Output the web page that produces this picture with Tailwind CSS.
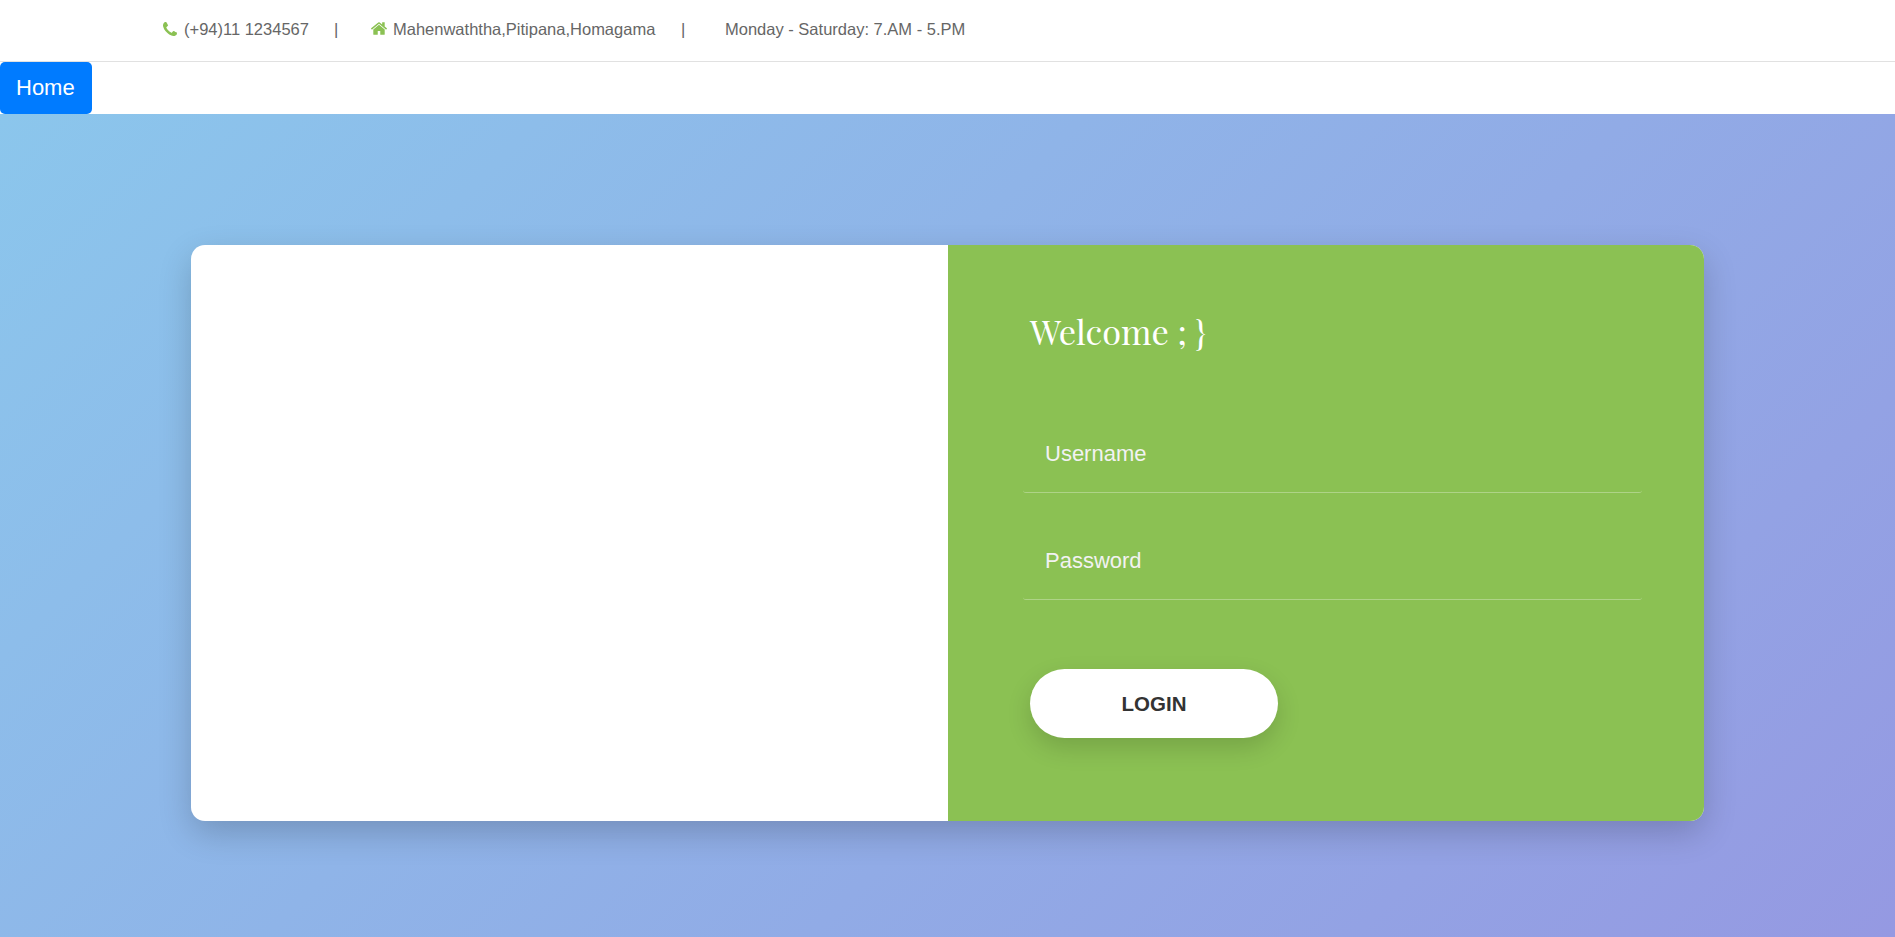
<!DOCTYPE html>
<html lang="en">
<head>
<meta charset="utf-8">
<title>Login</title>
<script src="https://cdn.jsdelivr.net/npm/@tailwindcss/browser@4"></script>
</head>
<body class="flex h-screen flex-col overflow-hidden bg-white font-['Liberation_Sans',Arial,sans-serif]">
<header class="flex h-[62px] shrink-0 items-start border-b border-[#e1e1e1] pt-[17px] pl-[163px] text-[16.5px] leading-6 whitespace-nowrap text-[#666]">
  <div class="flex w-[171px]">
    <svg class="mt-[5px] mr-[7px] size-[14px] text-[#8bc153]" viewBox="0 128 1408 1408" fill="currentColor"><path d="M1408 1240q0 27-10 70.500t-21 68.500q-21 50-122 106-94 51-186 51-27 0-53-3.500t-57.500-12.500-47-14.500-55.500-20.500-49-18q-98-35-175-83-127-79-264-216t-216-264q-48-77-83-175-3-9-18-49t-20.500-55.500-14.500-47-12.500-57.500-3.500-53q0-92 51-186 56-101 106-122 25-11 68.500-21t70.500-10q14 0 21 3 18 6 53 76 11 19 30 54t35 63.500 31 53.500q3 4 17.500 25t21.500 35.500 7 28.500q0 20-28.500 50t-62 55-62 53-28.500 46q0 9 5 22.500t8.500 20.500 14 24 11.500 19q76 137 174 235t235 174q2 1 19 11.500t24 14 20.500 8.500 22.500 5q18 0 46-28.500t53-62 55-62 50-28.500q14 0 28.500 7t35.500 21.500 25 17.500q25 15 53.500 31t63.500 35 54 30q70 35 76 53 3 7 3 21z"/></svg>
    <span>(+94)11 1234567</span>
  </div>
  <span class="w-[37px]">|</span>
  <div class="flex w-[310px]">
    <svg class="mt-[5px] mr-[6px] h-[13px] w-[16px] text-[#8bc153]" viewBox="24 253 1616 1283" fill="currentColor"><path d="M1408 992v480q0 26-19 45t-45 19H960v-384H704v384H320q-26 0-45-19t-19-45V992q0-1 .5-3t.5-3l575-474 575 474q1 2 1 6zm223-69l-62 74q-8 9-21 11h-3q-13 0-21-7L832 424 140 1001q-12 8-24 7-13-2-21-11l-62-74q-8-10-7-23.500t11-21.500l719-599q32-26 76-26t76 26l244 204V288q0-14 9-23t23-9h192q14 0 23 9t9 23v408l219 182q10 8 11 21.500t-7 23.500z"/></svg>
    <span>Mahenwaththa,Pitipana,Homagama</span>
  </div>
  <span class="w-[44px]">|</span>
  <span>Monday - Saturday: 7.AM - 5.PM</span>
</header>
<nav class="h-[52px] shrink-0">
  <a class="flex h-[52px] w-[92px] items-center rounded-[5px] bg-[#007bff] pb-px pl-4 text-[22px] text-white">Home</a>
</nav>
<main class="flex flex-1 items-start bg-[linear-gradient(135deg,#8bc6ec_0%,#9599e2_100%)] pt-[131px] pl-[191px]">
  <section class="flex h-[576px] w-[1513px] overflow-hidden rounded-[14px] bg-white shadow-[0_12px_34px_-1px_rgba(0,0,0,0.2)]">
    <div class="w-[757px]"></div>
    <form class="flex flex-1 flex-col bg-[#8bc153] pt-[59px] pl-[75px]">
      <h1 class="h-[55px] pl-[7px] font-['Playfair_Display','Liberation_Serif',serif] text-[34.300px] leading-[55px] text-white">Welcome ; }</h1>
      <input type="text" placeholder="Username" class="mt-[55px] h-[79px] w-[619px] rounded-[3px] border-b border-white/30 px-[22px] pt-px text-[22px] text-white outline-none placeholder:text-[#f2f2f2]">
      <input type="password" placeholder="Password" class="mt-[28px] h-[79px] w-[619px] rounded-[3px] border-b border-white/30 px-[22px] pt-px text-[22px] text-white outline-none placeholder:text-[#f2f2f2]">
      <button type="button" class="mt-[69px] ml-[7px] h-[69px] w-[248px] rounded-[35px] bg-white pt-[2px] text-[20.500px] font-bold text-[#333] shadow-[0_10px_25px_rgba(0,0,0,0.15)]">LOGIN</button>
    </form>
  </section>
</main>
</body>
</html>
